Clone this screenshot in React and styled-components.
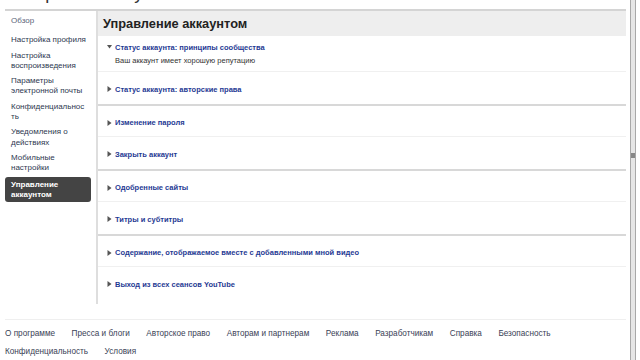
import React from 'react';
import styled, { createGlobalStyle } from 'styled-components';

const GlobalStyle = createGlobalStyle`
  html, body {
    margin: 0;
    padding: 0;
    background: #fff;
    overflow: hidden;
  }
  body {
    font-family: 'Liberation Sans', Arial, sans-serif;
  }
`;

const menuItems = [
  'Обзор',
  'Настройка профиля',
  'Настройка воспроизведения',
  'Параметры электронной почты',
  'Конфиденциальность',
  'Уведомления о действиях',
  'Мобильные настройки',
  'Управление аккаунтом',
];

const groups = [
  [
    {
      title: 'Статус аккаунта: принципы сообщества',
      open: true,
      text: 'Ваш аккаунт имеет хорошую репутацию',
    },
    { title: 'Статус аккаунта: авторские права' },
  ],
  [{ title: 'Изменение пароля' }, { title: 'Закрыть аккаунт' }],
  [{ title: 'Одобренные сайты' }, { title: 'Титры и субтитры' }],
  [
    { title: 'Содержание, отображаемое вместе с добавленными мной видео' },
    { title: 'Выход из всех сеансов YouTube' },
  ],
];

const footerLinks = [
  'О программе',
  'Пресса и блоги',
  'Авторское право',
  'Авторам и партнерам',
  'Реклама',
  'Разработчикам',
  'Справка',
  'Безопасность',
  'Конфиденциальность',
  'Условия',
];

const Arrow = ({ open }) => (
  <svg width="5" height="6" viewBox="0 0 5 6">
    {open ? (
      <path d="M0 1 L5 1 L2.5 4.5 Z" fill="#555" />
    ) : (
      <path d="M0.5 0 L4.5 3 L0.5 6 Z" fill="#555" />
    )}
  </svg>
);

const App = () => {
  const active = 'Управление аккаунтом';

  return (
    <>
      <GlobalStyle />
      <Page>
        <MainColumn>
          <PageTitle>Настройки аккаунта</PageTitle>
          <Frame>
            <Sidebar>
              {menuItems.map((item) => (
                <MenuItem key={item} $active={item === active}>
                  {item}
                </MenuItem>
              ))}
            </Sidebar>
            <Content>
              <ContentHeader>Управление аккаунтом</ContentHeader>
              {groups.map((group, gi) => (
                <Group key={gi} $last={gi === groups.length - 1}>
                  {group.map((section, si) => (
                    <Section
                      key={section.title}
                      $open={section.open}
                      $divider={si < group.length - 1}
                    >
                      <SectionTitle>
                        <Arrow open={section.open} />
                        <span>{section.title}</span>
                      </SectionTitle>
                      {section.text && <SectionText>{section.text}</SectionText>}
                    </Section>
                  ))}
                </Group>
              ))}
            </Content>
          </Frame>
          <Footer>
            {footerLinks.map((link) => (
              <FooterLink key={link}>{link}</FooterLink>
            ))}
          </Footer>
        </MainColumn>
        <ScrollTrack>
          <ScrollThumb />
        </ScrollTrack>
      </Page>
    </>
  );
};

export default App;

const Page = styled.div`
  width: 640px;
  height: 360px;
  display: flex;
  padding-left: 5px;
  box-sizing: border-box;
  overflow: hidden;
`;

const MainColumn = styled.div`
  width: 621px;
  display: flex;
  flex-direction: column;
`;

const PageTitle = styled.div`
  margin-top: -17px;
  font-size: 18px;
  line-height: 20px;
  color: #333;
`;

const Frame = styled.div`
  margin-top: 6px;
  display: flex;
  border-top: 2px solid #d4d4d4;
`;

const Sidebar = styled.div`
  width: 91px;
  flex-shrink: 0;
  padding: 3px 5px 0 0;
  box-sizing: border-box;
  display: flex;
  flex-direction: column;
  gap: 1px;
`;

const MenuItem = styled.div`
  padding: ${({ $active }) => ($active ? '3px 4px 2px 6px' : '2px 4px 2px 6px')};
  font-size: 8px;
  line-height: 10.3px;
  color: ${({ $active }) => ($active ? '#fff' : '#2e3850')};
  font-weight: ${({ $active }) => ($active ? 'bold' : 'normal')};
  background: ${({ $active }) => ($active ? '#444' : 'transparent')};
  border-radius: 3px;
  overflow-wrap: anywhere;

  &:first-child {
    margin-bottom: 4px;
    color: #5a6478;
  }
`;

const Content = styled.div`
  flex: 1;
  border-left: 2px solid #dedede;
  padding-bottom: 5px;
`;

const ContentHeader = styled.div`
  height: 25px;
  display: flex;
  align-items: center;
  padding-left: 5px;
  background: #eeeeee;
  font-size: 12.8px;
  font-weight: bold;
  color: #222;
`;

const Group = styled.div`
  border-bottom: ${({ $last }) => ($last ? 'none' : '2px solid #d8d8d8')};
`;

const Section = styled.div`
  height: ${({ $open }) => ($open ? '36px' : '31.5px')};
  padding: ${({ $open }) => ($open ? '6px 0 0 9px' : '12px 0 0 9px')};
  box-sizing: border-box;
  border-bottom: ${({ $divider }) => ($divider ? '1px solid #f0f0f0' : 'none')};
`;

const SectionTitle = styled.div`
  display: flex;
  align-items: center;
  gap: 3px;
  height: 10px;
  font-size: 7.5px;
  font-weight: bold;
  color: #1f3a93;
`;

const SectionText = styled.div`
  margin-top: 4px;
  padding-left: 8px;
  font-size: 7.5px;
  line-height: 10px;
  color: #333;
`;

const Footer = styled.div`
  margin-top: 15px;
  border-top: 1px solid #efefef;
  padding-top: 7px;
  display: flex;
  flex-wrap: wrap;
  column-gap: 16.5px;
  row-gap: 5px;
`;

const FooterLink = styled.span`
  font-size: 8.2px;
  line-height: 13px;
  color: #3a4256;
`;

const ScrollTrack = styled.div`
  margin-left: 4px;
  width: 4px;
  height: 360px;
  border-left: 1px solid #a8a8a8;
  border-right: 1px solid #a8a8a8;
  background: #e6e6e6;
  position: relative;
`;

const ScrollThumb = styled.div`
  position: absolute;
  top: 153px;
  left: 0;
  width: 4px;
  height: 5px;
  background: #888;
`;
